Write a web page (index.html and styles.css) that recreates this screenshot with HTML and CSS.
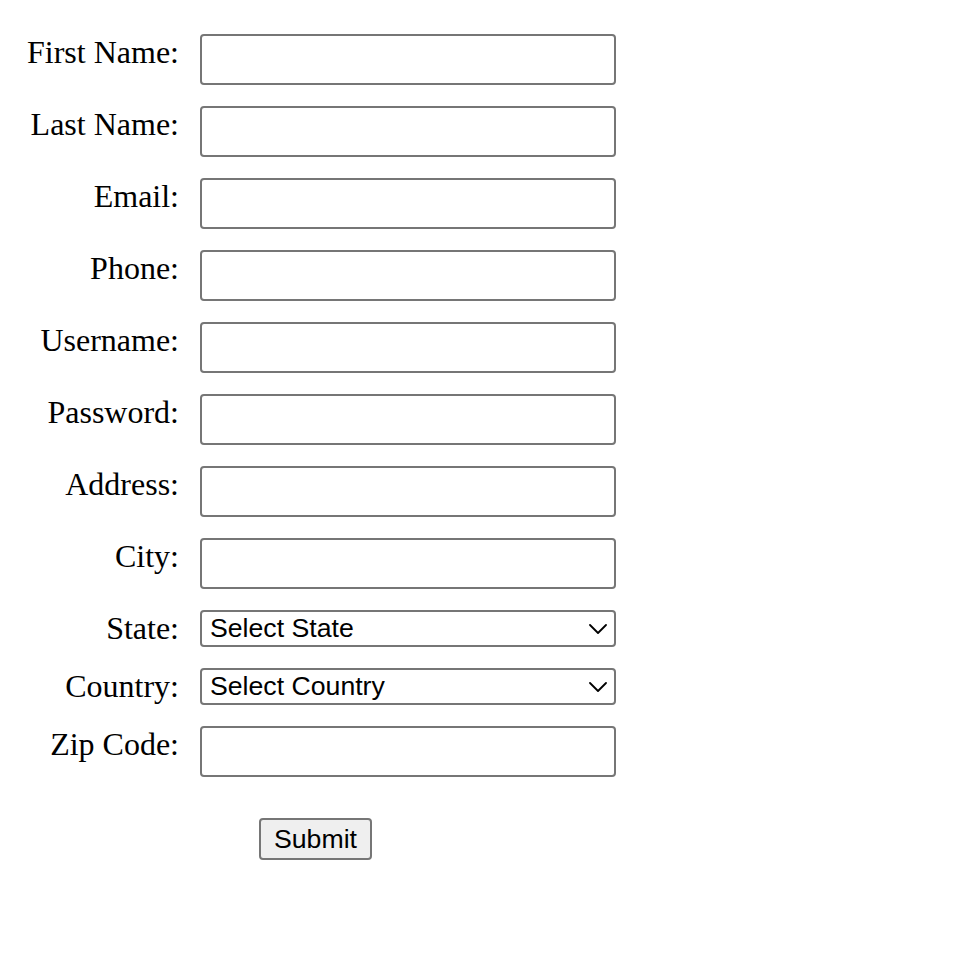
FILE: index.html
```html
<!DOCTYPE html>
<html lang="en">
<head>
<meta charset="utf-8">
<title>Registration Form</title>
<link rel="stylesheet" href="styles.css">
</head>
<body>
<form class="form">
  <label class="label" for="first">First Name:</label>
  <input class="field" id="first" type="text">
  <label class="label" for="last">Last Name:</label>
  <input class="field" id="last" type="text">
  <label class="label" for="email">Email:</label>
  <input class="field" id="email" type="email">
  <label class="label" for="phone">Phone:</label>
  <input class="field" id="phone" type="tel">
  <label class="label" for="user">Username:</label>
  <input class="field" id="user" type="text">
  <label class="label" for="pass">Password:</label>
  <input class="field" id="pass" type="password">
  <label class="label" for="addr">Address:</label>
  <input class="field" id="addr" type="text">
  <label class="label" for="city">City:</label>
  <input class="field" id="city" type="text">
  <label class="label" for="state">State:</label>
  <select class="select" id="state"><option>Select State</option></select>
  <label class="label" for="country">Country:</label>
  <select class="select" id="country"><option>Select Country</option></select>
  <label class="label" for="zip">Zip Code:</label>
  <input class="field" id="zip" type="text">
  <div class="actions">
    <button class="submit" type="submit">Submit</button>
  </div>
</form>
</body>
</html>
```

FILE: styles.css
```css
html, body {
  margin: 0;
  padding: 0;
  background: #ffffff;
}

body {
  font-family: "Liberation Serif", "Times New Roman", serif;
  color: #000000;
}

.form {
  display: grid;
  grid-template-columns: 164px 416px;
  column-gap: 20px;
  row-gap: 21px;
  align-items: start;
  padding: 34px 0 0 16px;
  margin: 0;
}

.label {
  font-size: 32px;
  line-height: 1.15;
  text-align: right;
  padding-right: 1px;
}

.field {
  box-sizing: border-box;
  width: 416px;
  height: 51px;
  margin: 0;
  border: 2px solid #767676;
  border-radius: 4px;
  background: #ffffff;
  font-family: "Liberation Sans", Arial, sans-serif;
  font-size: 26.67px;
  padding: 2px 4px;
  outline: none;
}

.select {
  box-sizing: border-box;
  width: 416px;
  height: 37px;
  margin: 0;
  border: 2px solid #767676;
  border-radius: 4px;
  background-color: #ffffff;
  font-family: "Liberation Sans", Arial, sans-serif;
  font-size: 26.67px;
  line-height: 1;
  color: #000000;
  padding: 0 40px 0 8px;
  -webkit-appearance: none;
  appearance: none;
  background-image: url("data:image/svg+xml;utf8,<svg xmlns='http://www.w3.org/2000/svg' width='18' height='10' viewBox='0 0 18 10'><path d='M1 1 L9 9 L17 1' fill='none' stroke='%23000' stroke-width='1.8' stroke-linecap='round' stroke-linejoin='round'/></svg>");
  background-repeat: no-repeat;
  background-position: right 7px center;
  background-size: 18px 10px;
}

.actions {
  grid-column: 2;
  padding-top: 20px;
}

.submit {
  box-sizing: border-box;
  margin: 0 0 0 59px;
  width: 113px;
  height: 42px;
  border: 2px solid #767676;
  border-radius: 4px;
  background: #efefef;
  font-family: "Liberation Sans", Arial, sans-serif;
  font-size: 26.67px;
  color: #000000;
  padding: 0;
}
```
